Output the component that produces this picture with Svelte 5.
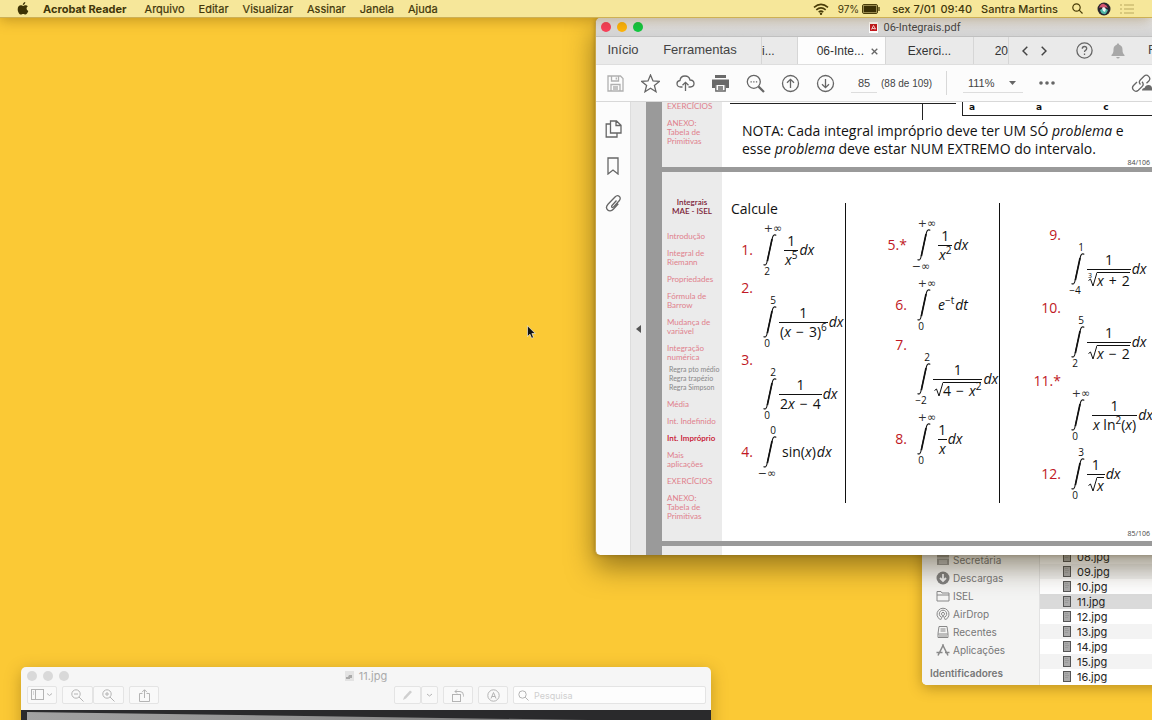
<script>
  const menus = ['Arquivo', 'Editar', 'Visualizar', 'Assinar', 'Janela', 'Ajuda'];

  const outline = [
    ['Introdução'],
    ['Integral de', 'Riemann'],
    ['Propriedades'],
    ['Fórmula de', 'Barrow'],
    ['Mudança de', 'variável'],
    ['Integração', 'numérica'],
    ['Média'],
    ['Int. Indefinido'],
    ['Int. Impróprio'],
    ['Mais', 'aplicações'],
    ['EXERCÍCIOS'],
    ['ANEXO:', 'Tabela de', 'Primitivas']
  ];
  const subsections = ['Regra pto médio', 'Regra trapézio', 'Regra Simpson'];

  const columns = [
    {
      name: 'first',
      items: [
        { n: '1.', hi: '+∞', lo: '2', den: [{ v: 'x' }, { sup: '5' }] },
        { n: '2.', own: true, hi: '5', lo: '0', den: [{ t: '(' }, { v: 'x' }, { op: '−' }, { t: '3)' }, { sup: '6' }] },
        { n: '3.', own: true, hi: '2', lo: '0', den: [{ t: '2' }, { v: 'x' }, { op: '−' }, { t: '4' }] },
        { n: '4.', hi: '0', lo: '−∞', body: [{ t: 'sin(' }, { v: 'x' }, { t: ')' }] }
      ]
    },
    {
      name: 'second',
      items: [
        { n: '5.*', hi: '+∞', lo: '−∞', den: [{ v: 'x' }, { sup: '2' }] },
        { n: '6.', hi: '+∞', lo: '0', body: [{ v: 'e' }, { sup: '−t' }], d: 'dt' },
        { n: '7.', own: true, hi: '2', lo: '−2', root: true, den: [{ t: '4' }, { op: '−' }, { v: 'x' }, { sup: '2' }] },
        { n: '8.', hi: '+∞', lo: '0', den: [{ v: 'x' }] }
      ]
    },
    {
      name: 'third',
      items: [
        { n: '9.', own: true, hi: '1', lo: '−4', root: true, index: '3', den: [{ v: 'x' }, { op: '+' }, { t: '2' }] },
        { n: '10.', own: true, hi: '5', lo: '2', root: true, den: [{ v: 'x' }, { op: '−' }, { t: '2' }] },
        { n: '11.*', own: true, hi: '+∞', lo: '0', den: [{ v: 'x' }, { t: ' ln' }, { sup: '2' }, { t: '(' }, { v: 'x' }, { t: ')' }] },
        { n: '12.', hi: '3', lo: '0', root: true, den: [{ v: 'x' }] }
      ]
    }
  ];

  const places = [
    ['desk', 'Secretária'],
    ['down', 'Descargas'],
    ['folder', 'ISEL'],
    ['air', 'AirDrop'],
    ['recent', 'Recentes'],
    ['apps', 'Aplicações']
  ];
  const files = ['08', '09', '10', '11', '12', '13', '14', '15', '16'];
</script>

{#snippet parts(list)}
  {#each list as p}{#if p.v}<i>{p.v}</i>{:else if p.sup}<sup>{p.sup}</sup>{:else if p.op}<span class="op">{p.op}</span>{:else}{p.t}{/if}{/each}
{/snippet}

<div class="desktop">
  <section class="window preview" aria-label="11.jpg">
    <header class="pv-title">
      <div class="lights"><i></i><i></i><i></i></div>
      <span class="pv-name">
        <svg width="9" height="10" viewBox="0 0 9 10"><path d="M0 0h9v10H0z" fill="#e3e3e3" /><path d="M1 6h2l1-2h3v3H5v1H1z" fill="#aaa" /></svg>
        11.jpg
      </span>
    </header>
    <div class="pv-tools">
      <button aria-label="Barra lateral" class="w30">
        <svg width="22" height="12" viewBox="0 0 22 12"><rect x=".5" y=".5" width="12" height="10" /><path d="M4.500 .5v10M2 3h1M2 5h1M16 4.500l2.500 2 2.500-2" /></svg>
      </button>
      <div class="pair">
        <button aria-label="Reduzir" class="w31"><svg width="13" height="13" viewBox="0 0 13 13"><circle cx="5" cy="5" r="4.200" /><path d="M8 8l4.500 4.500M3 5h4" /></svg></button>
        <button aria-label="Ampliar" class="w31"><svg width="13" height="13" viewBox="0 0 13 13"><circle cx="5" cy="5" r="4.200" /><path d="M8 8l4.500 4.500M3 5h4M5 3v4" /></svg></button>
      </div>
      <button aria-label="Partilhar" class="w30">
        <svg width="11" height="13" viewBox="0 0 11 13"><path d="M3.500 4.500h-3v8h10v-8h-3M5.500 9V1M3 3.200L5.500.7 8 3.200" /></svg>
      </button>
      <span class="grow"></span>
      <div class="pair">
        <button aria-label="Marcador" class="w27"><svg width="12" height="12" viewBox="0 0 12 12"><path d="M1 11l1-3 6-6.500 2 1.500-6 6.500z" fill="#cfcfcf" stroke="none" /></svg></button>
        <button aria-label="Opções" class="w17"><svg width="7" height="5" viewBox="0 0 7 5"><path d="M1 1l2.500 2L6 1" /></svg></button>
      </div>
      <button aria-label="Rodar" class="w30"><svg width="14" height="13" viewBox="0 0 14 13"><rect x="1.500" y="5.500" width="8" height="7" /><path d="M4 2.500h5q3.500 0 3.500 4v1M6 .5l-2 2 2 2" /></svg></button>
      <button aria-label="Anotar" class="w30"><svg width="13" height="13" viewBox="0 0 13 13"><circle cx="6.500" cy="6.500" r="5.700" /><path d="M4 9.500l2.500-6 2.500 6M5 7.500h3" /></svg></button>
      <label class="search">
        <svg width="11" height="11" viewBox="0 0 11 11"><circle cx="4.500" cy="4.500" r="3.700" /><path d="M7.200 7.200l3.300 3.300" /></svg>
        <input type="search" aria-label="Pesquisa" placeholder="Pesquisa" />
      </label>
    </div>
    <div class="photo"><div class="sheet"></div></div>
  </section>

  <section class="window finder" aria-label="Finder">
    <nav>
      <ul>
        {#each places as [icon, label]}
          <li>
            <svg width="14" height="14" viewBox="0 0 14 14">
              {#if icon === 'desk'}
                <rect x="1" y="2" width="12" height="10" fill="#999" stroke="none" /><path d="M1 5h12M3 8h8M3 10h8" stroke="#ddd" />
              {:else if icon === 'down'}
                <circle cx="7" cy="7" r="6.500" fill="#808080" stroke="none" /><path d="M7 3v6.500M4 7l3 3 3-3" stroke="#eee" stroke-width="1.800" />
              {:else if icon === 'folder'}
                <path d="M1 2.500h4l1 1.500h7v8H1zM1 6h12" />
              {:else if icon === 'air'}
                <path d="M4 12.400a6 6 0 1 1 6 0M5 10a3.700 3.700 0 1 1 4 0M6 8a1.500 1.500 0 1 1 2 0M7 8l-2.500 5M7 8l2.500 5" />
              {:else if icon === 'recent'}
                <path d="M3 1.500h8l1 7v4H2v-4zM2 9h10M4.500 4h5M4.500 6h5M3 11h8" />
              {:else}
                <path d="M2 12.500l5.500-11M6.500 1.500L12 12.500M.5 9.500h6M9 9.500h4.500" stroke-width="1.500" />
              {/if}
            </svg>
            {label}
          </li>
        {/each}
      </ul>
      <h3>Identificadores</h3>
    </nav>
    <ul class="files">
      {#each files as f}
        <li class:selected={f === '11'}>
          <svg width="8" height="11" viewBox="0 0 8 11"><rect x=".5" y=".5" width="7" height="10" fill="#aaa" stroke="#555" /><path d="M2 2.500h3M2 4.500h4M2 6.500h3" stroke="#999" /></svg>
          {f}.jpg
        </li>
      {/each}
    </ul>
  </section>

  <section class="window acrobat" aria-label="06-Integrais.pdf">
    <header class="titlebar">
      <div class="lights"><i></i><i></i><i></i></div>
      <span class="name">
        <svg width="9" height="11" viewBox="0 0 9 11"><path d="M0 0h9v11H0z" fill="#fff" /><path d="M1 2h7v7H1z" fill="#c4161c" /><path d="M2.500 7.500L4.500 3.500 6.500 7 3 6.200" fill="none" stroke="#fff" stroke-width=".8" /></svg>
        06-Integrais.pdf
      </span>
    </header>

    <div class="tabs">
      <button class="big home">Início</button>
      <button class="big tools">Ferramentas</button>
      <button class="tab t1">i...</button>
      <div class="tab active"><span>06-Inte...</span><button aria-label="Fechar"><svg width="7" height="7" viewBox="0 0 7 7"><path d="M.7.7l5.600 5.600M6.300.7L.7 6.300" /></svg></button></div>
      <button class="tab t3">Exerci...</button>
      <button class="tab t4">20</button>
      <button class="arrow" aria-label="Anterior"><svg width="6" height="10" viewBox="0 0 6 10"><path d="M5.300.8L1 5l4.300 4.200" /></svg></button>
      <button class="arrow" aria-label="Seguinte"><svg width="6" height="10" viewBox="0 0 6 10"><path d="M.7.8L5 5 .7 9.200" /></svg></button>
      <button class="help" aria-label="Ajuda"><svg width="17" height="17" viewBox="0 0 17 17"><circle cx="8.500" cy="8.500" r="7.600" /><path d="M6.300 6.700q0-2.200 2.200-2.200t2.200 2q0 1.200-1.300 1.900-.9.500-.9 1.600M8.500 11.500v1.500" /></svg></button>
      <button class="bell" aria-label="Notificações"><svg width="14" height="16" viewBox="0 0 14 16"><path d="M7 .5c.8 0 1.200.5 1.200 1.200C10.500 2.300 11.500 4 11.500 6.500c0 3 .5 4 2 5.500v1H.5v-1c1.500-1.500 2-2.500 2-5.500 0-2.500 1-4.200 3.300-4.800C5.800 1 6.200.5 7 .5zM5.200 14h3.600q-.4 1.600-1.800 1.600T5.200 14z" fill="#a8a8a8" stroke="none" /></svg></button>
      <button class="big sign">F</button>
    </div>

    <div class="toolbar">
      <button aria-label="Guardar" class="dim"><svg width="19" height="19" viewBox="0 0 19 19"><path d="M2 2h12.500L17 4.500V17H2zM5.500 2v5h7V2M10.300 3.500v2M5 17v-6.500h9V17M7 13h5M7 15h5" /></svg></button>
      <button aria-label="Favorito"><svg width="19" height="19" viewBox="0 0 19 19"><path d="M9.500 1l2.500 6 6.300.4-4.900 4 1.600 6.300-5.500-3.500L4 17.700l1.600-6.300-4.900-4L7 7z" /></svg></button>
      <button aria-label="Carregar"><svg width="19" height="19" viewBox="0 0 19 19"><path d="M6.500 13H4.700C2.400 13 1 11.600 1 9.700c0-1.700 1.200-3 3-3.200C4.300 3.800 6.400 2 9 2c2.500 0 4.500 1.500 5 4 2.400.1 4 1.500 4 3.600 0 2-1.500 3.400-3.700 3.400h-1.800M9.500 17V8.500M6.500 11.300l3-3 3 3" /></svg></button>
      <button aria-label="Imprimir"><svg width="19" height="19" viewBox="0 0 19 19"><path d="M4 1h11v3H4zM1 5.500h17V14h-3v-3H4v3H1z" fill="#6a6a6a" stroke="none" /><path d="M4.800 11v6h9.400v-6M7 13h5M7 15h5" /></svg></button>
      <button aria-label="Procurar"><svg width="19" height="19" viewBox="0 0 19 19"><circle cx="7.800" cy="7.800" r="6.500" /><path d="M12.600 12.600l5.400 5.400" stroke-width="2.200" /><path d="M4.500 7.800h1.300M7.200 7.800h1.300M9.900 7.800h1.300" /></svg></button>
      <button aria-label="Página anterior"><svg width="19" height="19" viewBox="0 0 19 19"><circle cx="9.500" cy="9.500" r="8" /><path d="M9.500 14V5.500M6 8.800l3.500-3.500L13 8.800" /></svg></button>
      <button aria-label="Página seguinte"><svg width="19" height="19" viewBox="0 0 19 19"><circle cx="9.500" cy="9.500" r="8" /><path d="M9.500 5v8.500M6 10.200l3.500 3.500 3.500-3.500" /></svg></button>
      <input class="page-no" aria-label="Página" value="85" />
      <span class="of">(88 de 109)</span>
      <span class="rule"></span>
      <div class="zoom">
        <select aria-label="Ampliação"><option>111%</option></select>
        <svg width="7" height="4" viewBox="0 0 7 4"><path d="M0 0h7L3.500 4z" fill="#666" stroke="none" /></svg>
      </div>
      <button class="more" aria-label="Mais"><svg width="16" height="4" viewBox="0 0 16 4"><g fill="#666" stroke="none"><circle cx="2" cy="2" r="1.800" /><circle cx="8" cy="2" r="1.800" /><circle cx="14" cy="2" r="1.800" /></g></svg></button>
      <button class="link" aria-label="Ligação"><svg width="24" height="20" viewBox="0 0 24 20"><path d="M6 9l-3.500 3.500a3.400 3.400 0 0 0 4.800 4.800L11 13.600a3.400 3.400 0 0 0 0-4.800M9.500 11.500a3.400 3.400 0 0 1 0-4.800L13 3.200A3.400 3.400 0 0 1 17.800 8L15.500 10.300" /><path d="M11 17.500q0-2.500 2.500-2.500 1-3 4-3t3.500 3q2.500 0 2.500 2.500z" fill="#6a6a6a" stroke="none" /></svg></button>
    </div>

    <div class="view">
      <aside class="rail">
        <button aria-label="Miniaturas"><svg width="17" height="18" viewBox="0 0 17 18"><path d="M5.500 1h6L16 5.200V13H5.500zM11 1v4.500h5M5.500 4H1.200v13H12v-4" /></svg></button>
        <button aria-label="Marcadores"><svg width="17" height="18" viewBox="0 0 17 18"><path d="M3 1h10v16l-5-4-5 4z" /></svg></button>
        <button aria-label="Anexos"><svg width="17" height="18" viewBox="0 0 17 18"><path d="M11.500 6.500L7 11.500c-1.200 1.300.4 2.700 1.600 1.400l5.600-6.200c3-3.300-1.200-6.900-4.200-3.700L3 10.200c-3.900 4.300 1.300 9.300 5.300 5l5-5.500" /></svg></button>
      </aside>
      <button class="fold" aria-label="Mostrar painel"><svg width="5" height="8" viewBox="0 0 5 8"><path d="M5 0v8L0 4z" fill="#555" stroke="none" /></svg></button>

      <div class="pages">
        <article class="page before">
          <div class="toc">
            <ol>
              <li>EXERCÍCIOS</li>
              <li>ANEXO:<br />Tabela de<br />Primitivas</li>
            </ol>
          </div>
          <div class="slide">
            <div class="scraps">
              <div class="scrap-line"><span></span></div>
              <div class="scrap-box"><b>a</b><b>a</b><b>c</b></div>
            </div>
            <p class="nota">NOTA: Cada integral impróprio deve ter UM SÓ <i>problema</i> e<br />esse <i>problema</i> deve estar NUM EXTREMO do intervalo.</p>
            <footer>84/106</footer>
          </div>
        </article>

        <article class="page current-page">
          <div class="toc">
            <h2>Integrais<br />MAE - ISEL</h2>
            <ol>
              {#each outline as lines}
                <li class:current={lines[0] === 'Int. Impróprio'}>
                  {#each lines as l}<div>{l}</div>{/each}
                  {#if lines[0] === 'Integração'}
                    <ul>
                      {#each subsections as s}<li>{s}</li>{/each}
                    </ul>
                  {/if}
                </li>
              {/each}
            </ol>
          </div>
          <div class="slide">
            <div class="cols">
              {#each columns as col}
                <div class="col {col.name}">
                  {#if col.name === 'first'}<h1>Calcule</h1>{/if}
                  {#each col.items as q}
                    <div class="q" class:own={q.own}>
                      <span class="n">{q.n}</span>
                      <div class="formula">
                        <div class="int" class:wide={q.hi === '+∞'}>
                          <span class="hi" class:inf={q.hi.includes('∞')}>{q.hi}</span>
                          <svg width="14" height="32" viewBox="0 0 14 32"><path d="M.6 30.500c1.400 1.200 2.600.4 3.200-1.800L9.600 3.200C10.200 1 11.800.2 13.300 1.400" fill="none" stroke="#111" stroke-width="1.100" /><path d="M4.400 27L9 5" stroke="#111" stroke-width="1.600" /></svg>
                          <span class="lo" class:inf={q.lo.includes('∞')}>{q.lo}</span>
                        </div>
                        {#if q.body}
                          <span class="body">{@render parts(q.body)}</span>
                        {:else}
                          <span class="frac">
                            <span class="top">1</span>
                            <span class="den">
                              {#if q.root}
                                {#if q.index}<small>{q.index}</small>{/if}
                                <svg width="9" height="15" viewBox="0 0 9 15"><path d="M.5 8.500L2.500 7l2.500 7L9 .5" fill="none" stroke="#111" /></svg>
                                <span class="rad">{@render parts(q.den)}</span>
                              {:else}
                                <span>{@render parts(q.den)}</span>
                              {/if}
                            </span>
                          </span>
                        {/if}
                        <i class="d">{q.d ?? 'dx'}</i>
                      </div>
                    </div>
                  {/each}
                </div>
              {/each}
            </div>
            <footer>85/106</footer>
          </div>
        </article>

        <article class="page after"><div class="toc"></div></article>
      </div>
    </div>
  </section>

  <header class="menubar">
    <svg class="apple" width="12" height="13" viewBox="0 0 12 13"><path d="M8.300 0c.1 1.500-1 2.900-2.500 2.900C5.700 1.500 6.900.2 8.300 0zM10.800 4.300C9 5.500 9.200 8 11.300 9c-.6 1.700-1.800 3.600-2.900 3.600-.8 0-1.200-.5-2.200-.5s-1.500.5-2.200.5C2.400 12.600.7 9.800.7 7.200.7 4.700 2.200 3.300 3.800 3.300c1 0 1.700.6 2.400.6s1.400-.7 2.600-.7c.8 0 1.500.4 2 1.100z" fill="#3d3205" /></svg>
    <b>Acrobat Reader</b>
    <nav class="menus">
      {#each menus as m}<span>{m}</span>{/each}
    </nav>
    <span class="grow"></span>
    <svg width="16" height="12" viewBox="0 0 16 12"><g fill="none" stroke="#4a3d08" stroke-width="1.600"><path d="M1 4.300q7-6 14 0M3.300 6.800q4.700-4 9.400 0M5.700 9.200q2.300-2 4.600 0" /></g><circle cx="8" cy="10.800" r="1.200" fill="#4a3d08" /></svg>
    <span class="pct">97%</span>
    <svg class="battery" width="18" height="10" viewBox="0 0 18 10"><rect x=".5" y=".5" width="15" height="9" rx="1.500" fill="none" stroke="#4a3d08" /><rect x="1.500" y="1.500" width="13" height="7" fill="#3a2f05" /><path d="M17 3v4" stroke="#4a3d08" stroke-width="1.300" /></svg>
    <span class="date">sex 7/01</span>
    <span class="time">09:40</span>
    <span class="user">Santra Martins</span>
    <svg class="glass" width="11" height="11" viewBox="0 0 11 11"><g fill="none" stroke="#4a3d08" stroke-width="1.200"><circle cx="4.500" cy="4.500" r="3.700" /><path d="M7.200 7.200l3.300 3.300" /></g></svg>
    <svg class="siri" width="14" height="14" viewBox="0 0 14 14"><circle cx="7" cy="7" r="6.500" fill="#28252f" /><path d="M2 6q2-5 5-4t4 4q-3-2-4 1-2-3-5-1z" fill="#d4546e" /><path d="M3 8q3-2 4-1 2-1 4 1-2 5-4 4-3 0-4-4z" fill="#4fb7a7" /><path d="M5 6l2-1 2 2-1 3-2-1z" fill="#e8f4f6" /></svg>
    <svg width="14" height="10" viewBox="0 0 14 10"><path d="M0 1h2M4 1h10M0 5h2M4 5h10M0 9h2M4 9h10" stroke="#b9a95f" stroke-width="1.200" /></svg>
  </header>

  <svg class="cursor" width="9" height="14" viewBox="0 0 9 14"><path d="M.5.8v10.700L3 9.200l1.600 4 1.900-.8L4.900 8.500h3.400z" fill="#111" stroke="#fff" stroke-width=".6" /></svg>
</div>

<style>
  :global(body) { margin: 0; }
  :where(h1, h2, h3, p, ul, ol) { margin: 0; padding: 0; font-weight: normal; list-style: none; }
  .desktop {
    position: relative;
    height: 100vh;
    overflow: hidden;
    background: #fbc935;
    font-family: Inter, "Liberation Sans", sans-serif;
    font-size: 12px;
    color: #222;
  }
  button { border: 0; padding: 0; background: none; font: inherit; color: inherit; display: flex; align-items: center; justify-content: center; }
  svg { display: block; flex: none; }
  .grow { flex: 1; }

  .menubar {
    position: absolute;
    inset: 0 0 auto 0;
    height: 18px;
    box-sizing: border-box;
    padding: 0 18px 0 17px;
    display: flex;
    align-items: center;
    white-space: nowrap;
    background: #f6e79a;
    border-bottom: 1px solid #cdb055;
    box-shadow: 0 2px 14px rgba(110, 70, 0, .4);
    color: #41360a;
    font-size: 11px;
    font-weight: 500;
  }
  .menubar b { margin-left: 14px; font-weight: 700; }
  .menus { display: flex; gap: 14px; margin-left: 18px; font-weight: 400; -webkit-text-stroke: .2px #41360a; }
  .pct { margin-left: 9px; font-size: 10px; font-weight: 400; }
  .battery { margin-left: 3px; }
  .date { margin-left: 12px; }
  .time { margin-left: 5px; }
  .user { margin-left: 9px; }
  .glass { margin-left: 14px; }
  .siri { margin: 0 9px 0 14px; }

  .window { position: absolute; display: flex; flex-direction: column; overflow: hidden; border-radius: 5px; }
  .lights { display: flex; gap: 6px; }
  .lights i { width: 10px; height: 10px; border-radius: 50%; background: #d9d9d9; }

  .preview { left: 21px; bottom: -40px; top: calc(100vh - 53px); right: calc(100% - 711px); background: #f6f6f6; box-shadow: 0 4px 16px rgba(90, 60, 0, .35); }
  .pv-title { display: flex; align-items: center; height: 18px; padding-left: 6px; }
  .pv-name { flex: 1; display: flex; justify-content: center; gap: 5px; margin-right: 48px; color: #aaa; font-size: 11px; align-items: center; }
  .pv-tools { display: flex; gap: 5px; height: 18px; padding: 1px 5px 6px 6px; }
  .pv-tools svg { fill: none; stroke: #b4b4b4; }
  .pv-tools button, .search { background: #f9f9f9; border: 1px solid #e4e4e4; border-radius: 2px; box-sizing: border-box; }
  .pair { display: flex; }
  .w17 { width: 17px; }
  .w27 { width: 27px; }
  .w30 { width: 30px; }
  .w31 { width: 31px; }
  .search { display: flex; align-items: center; gap: 5px; width: 193px; padding-left: 4px; background: #fdfdfd; }
  .search input { flex: 1; min-width: 0; border: 0; padding: 0; background: none; font: 9px Inter, sans-serif; outline: 0; }
  .search input::placeholder { color: #cfcfcf; }
  .photo { flex: 1; background: #2a2a2c; padding: 2px 0 0 6px; }
  .sheet { height: 8px; background: linear-gradient(90deg, #a2a2a2, #777); clip-path: polygon(0 0, 82% 100%, 0 100%); }

  .finder { left: 922px; right: -200px; top: calc(100vh - 200px); height: 165px; flex-direction: row; align-items: flex-end; background: #fff; box-shadow: 0 3px 14px rgba(90, 60, 0, .4); }
  .finder nav { width: 118px; height: 100%; box-sizing: border-box; padding: 0 0 4px 8px; background: #f4f4f3; border-right: 1px solid #e2e2e2; color: #777; font-size: 10px; font-weight: 500; display: flex; flex-direction: column; justify-content: flex-end; }
  .finder nav li { display: flex; align-items: center; gap: 3px; height: 18px; padding-left: 6px; }
  .finder nav svg { fill: none; stroke: #888; }
  .finder h3 { font-size: 10px; font-weight: 600; line-height: 16px; margin-top: 6px; }
  .files { flex: 1; font-size: 11px; padding-bottom: 1px; }
  .files li { display: flex; align-items: center; gap: 6px; height: 15px; padding-left: 23px; }
  .files li:nth-child(even) { background: #f3f3f3; }
  .files li.selected { background: #dadada; }
  .files svg { fill: none; }

  .acrobat { left: 595px; right: -83px; top: 18px; height: 537px; background: #fcfcfc; border-left: 1px solid #c9a648; box-sizing: border-box; box-shadow: 0 12px 28px rgba(50, 35, 0, .5), 0 0 4px rgba(60, 40, 0, .3); }
  .acrobat svg { fill: none; stroke: #666; stroke-width: 1.3; }
  .titlebar { display: flex; align-items: center; height: 19px; padding: 0 0 0 5px; background: linear-gradient(#e9e9e9, #d2d2d2); border-bottom: 1px solid #c0c0c0; box-sizing: border-box; flex: none; }
  .titlebar .name { flex: 1; display: flex; align-items: center; justify-content: center; gap: 5px; margin-right: 48px; color: #444; font: 11px Roboto, sans-serif; }
  .titlebar .name svg { stroke: none; }
  .acrobat .lights i:nth-child(1) { background: #f8405a; }
  .acrobat .lights i:nth-child(2) { background: #fdb40a; }
  .acrobat .lights i:nth-child(3) { background: #10c840; }

  .tabs { display: flex; height: 28px; flex: none; background: #eaeaea; font: 12px "Liberation Sans", sans-serif; color: #333; white-space: nowrap; box-sizing: border-box; border-bottom: 1px solid #dedede; overflow: hidden; }
  .tabs .big { font-size: 13px; color: #444; padding-bottom: 2px; }
  .home { margin-left: 11px; width: 32px; }
  .tools { margin: 0 22px; width: 78px; }
  .tab { border-left: 1px solid #d6d6d6; box-sizing: border-box; height: 28px; flex: none; }
  .t1 { width: 36px; justify-content: flex-start; }
  .active { display: flex; align-items: center; width: 88px; justify-content: flex-end; gap: 7px; padding-right: 7px; background: #fdfdfd; }
  .t3 { width: 88px; }
  .t4 { width: 36px; justify-content: flex-end; border-right: 1px solid #d6d6d6; }
  .arrow { margin-left: 13px; }
  .arrow svg { stroke: #444; stroke-width: 1.500; }
  .help { margin-left: 29px; }
  .bell { margin-left: 18px; }
  .sign { margin-left: 23px; }

  .toolbar { display: flex; align-items: center; gap: 16px; height: 37px; flex: none; padding-left: 10px; box-sizing: border-box; border-bottom: 1px solid #d8d8d8; color: #444; font: 11px "Liberation Sans", sans-serif; white-space: nowrap; }
  .toolbar .dim svg { stroke: #b0b0b0; }
  .page-no { width: 26px; height: 20px; padding: 0; border: 0; border-bottom: 1px solid #ddd; text-align: center; background: none; font: inherit; color: inherit; box-sizing: border-box; }
  .of { margin-left: -12px; width: 49px; font-size: 10px; }
  .rule { width: 1px; height: 24px; background: #d8d8d8; }
  .zoom { display: flex; align-items: center; justify-content: space-between; width: 60px; height: 20px; padding: 0 7px 0 5px; box-sizing: border-box; border-bottom: 1px solid #ddd; }
  .zoom select { appearance: none; border: 0; padding: 0; background: none; font: inherit; color: inherit; }
  .link { margin-left: 60px; }

  .view { flex: 1; display: flex; min-height: 0; }
  .rail { width: 35px; box-sizing: border-box; padding-top: 18px; display: flex; flex-direction: column; align-items: center; gap: 19px; border-right: 1px solid #ddd; flex: none; }
  .fold { width: 15px; flex: none; background: #e9e9e9; padding-right: 1px; box-sizing: border-box; }
  .pages { flex: 1; display: flex; flex-direction: column; gap: 5px; background: #9a9a9a; padding-left: 16px; min-width: 0; overflow: hidden; }

  .page { width: 492px; display: flex; flex: none; background: #fff; color: #111; font-family: "Open Sans", "DejaVu Sans", sans-serif; }
  .page.before { height: 65px; }
  .page.current-page { min-height: 369px; }
  .page.after { height: 20px; }
  .toc { width: 60px; flex: none; box-sizing: border-box; background: #ebebeb; padding-left: 5px; color: #e0808c; font-family: Lato, sans-serif; font-size: 8px; line-height: 9px; white-space: nowrap; }
  .toc h2 { padding-top: 26px; margin: 0 5px 16px 0; text-align: center; font-size: 8px; line-height: 9px; color: #7c2338; font-weight: 600; }
  .toc ol { display: flex; flex-direction: column; gap: 8px; }
  .toc ul { padding: 3px 0 0 2px; color: #888; font-size: 7px; }
  .toc .current { color: #c8102e; font-weight: 600; }
  .slide { flex: 1; min-width: 0; display: flex; flex-direction: column; }
  .slide footer { text-align: right; padding-right: 4px; font-size: 7px; line-height: 10px; color: #444; margin-top: auto; margin-bottom: 2px; }

  .scraps { display: flex; gap: 6px; height: 18px; padding-left: 8px; flex: none; }
  .scrap-line { width: 226px; box-sizing: border-box; border-top: 1px solid #222; margin-top: 1px; padding-left: 192px; }
  .scrap-line span { display: block; width: 1px; height: 16px; background: #222; }
  .scrap-box { flex: 1; display: flex; gap: 61px; height: 13px; padding-left: 6px; border-left: 1px solid #222; border-bottom: 1px solid #222; font-size: 9px; line-height: 11px; font-family: "DejaVu Sans", sans-serif; }
  .nota { padding: 2px 0 0 20px; font-size: 14px; line-height: 18px; white-space: nowrap; }

  .cols { display: flex; margin-top: 31px; height: 300px; }
  .col { width: 154px; box-sizing: border-box; display: flex; flex-direction: column; border-right: 1px solid #111; flex: none; }
  .col.third { border-right: 0; gap: 5px; padding-top: 25px; }
  .col.second { gap: 6px; padding-top: 15px; }
  .col.first { width: 124px; gap: 4px; }
  .slide h1 { font-size: 14px; line-height: 12px; padding-left: 9px; margin-bottom: 4px; }
  .q { display: grid; grid-template-columns: 61px 1fr; column-gap: 10px; align-items: center; font-size: 14px; white-space: nowrap; }
  .first .q { grid-template-columns: 31px 1fr; }
  .n { text-align: right; color: #c01824; line-height: 14px; }
  .own .formula { grid-area: 2 / 2; }
  .formula { display: flex; align-items: center; height: 54px; width: 0; }
  .int { width: 16px; flex: none; display: flex; flex-direction: column; }
  .int.wide { width: 21px; }
  .hi, .lo { display: flex; justify-content: center; height: 11px; font-size: 10px; line-height: 11px; }
  .hi { width: 20px; }
  .lo { width: 8px; }
  .inf { font-family: "DejaVu Sans", sans-serif; font-size: 11px; color: #333; }
  .acrobat .int svg, .acrobat .den svg { stroke-width: 1; }
  .body { line-height: 20px; padding-left: 3px; }
  .wide + .body { padding-left: 0; }
  .frac { display: flex; flex-direction: column; align-items: center; line-height: 17px; }
  .top { line-height: 18px; }
  .den { align-self: stretch; display: flex; justify-content: center; align-items: flex-start; border-top: 1px solid #111; height: 18px; padding: 0 1px; }
  .den svg { margin-top: 2px; }
  .den small { font-size: 7px; line-height: 12px; margin-right: -4px; }
  .rad { border-top: 1px solid #111; margin-top: 2px; line-height: 15px; }
  .op { padding: 0 5px; }
  .q sup { font-size: 10px; line-height: 0; }
  .d { padding-left: 1px; line-height: 18px; }

  .cursor { position: absolute; left: 527px; top: 325px; }
</style>
